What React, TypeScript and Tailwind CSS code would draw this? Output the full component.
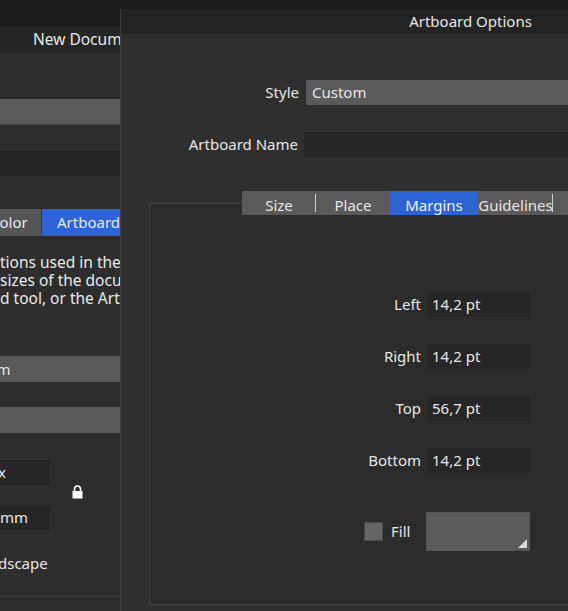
import React from "react";

const font = { fontFamily: '"Noto Sans", "Open Sans", sans-serif' };

function LockIcon() {
  return (
    <svg width="11" height="14" viewBox="0 0 11 14" className="block">
      <path d="M2.5 6V4a3 3 0 0 1 6 0v2" fill="none" stroke="#fff" strokeWidth="1.6" />
      <rect x="0.5" y="6" width="10" height="7.5" fill="#fff" />
    </svg>
  );
}

function BackWindow() {
  return (
    <div className="flex flex-col w-[120px] h-full overflow-hidden text-[15px] text-[#e8e8e8]">
      <div className="h-[27px] bg-[#1c1c1c] shrink-0" />
      <div className="h-[26px] bg-[#252525] flex items-center whitespace-nowrap shrink-0">
        <span className="ml-[33px] text-[15.5px]">New Document</span>
      </div>
      <div className="flex-1 bg-[#2d2d2d] flex flex-col">
        <div className="h-[46px] shrink-0 border-b-2 border-[#292929]" />
        <div className="h-[26px] shrink-0 bg-[#5a5a5a] border-b-2 border-[#4b4b4b]" />
        <div className="h-[26px] shrink-0" />
        <div className="h-[25px] shrink-0 bg-[#232323]" />
        <div className="h-[33px] shrink-0" />
        <div className="flex h-[27px] shrink-0 whitespace-nowrap">
          <div className="w-[42px] bg-[#555555] flex items-center overflow-hidden">
            <span className="-ml-[10px]">Color</span>
          </div>
          <div className="flex-1 bg-[#2c63d6] border-l border-[#3a3a3a] flex items-center pl-[15px]">
            Artboard
          </div>
        </div>
        <div className="pt-[17px] leading-[18px] text-[15.5px] whitespace-nowrap flex flex-col shrink-0">
          <span>tions used in the current</span>
          <span>sizes of the document</span>
          <span>d tool, or the Artboard</span>
        </div>
        <div className="h-[49px] shrink-0" />
        <div className="h-[26px] shrink-0 bg-[#595959] flex items-center whitespace-nowrap overflow-hidden">
          <span className="-ml-[44px]">Custom</span>
        </div>
        <div className="h-[25px] shrink-0" />
        <div className="h-[26px] shrink-0 bg-[#595959]" />
        <div className="h-[27px] shrink-0" />
        <div className="flex items-start h-[25px] shrink-0">
          <div className="w-[50px] h-[25px] bg-[#262626] flex items-center overflow-hidden whitespace-nowrap">
            <span className="-ml-[2px]">x</span>
          </div>
          <div className="ml-[22px] mt-[25px]">
            <LockIcon />
          </div>
        </div>
        <div className="h-[20px] shrink-0" />
        <div className="w-[50px] h-[25px] shrink-0 bg-[#262626] flex items-center whitespace-nowrap">
          <span>mm</span>
        </div>
        <div className="mt-[21px] h-[24px] shrink-0 flex items-center whitespace-nowrap">
          <span className="-ml-[2px]">dscape</span>
        </div>
        <div className="mt-[21px] border-t border-[#3a3a3a] flex-1 bg-[#2b2b2b]" />
      </div>
    </div>
  );
}

const tabs = [
  { label: "Size", w: "w-[74px]", active: false, sep: true },
  { label: "Place", w: "w-[74px]", active: false, sep: false },
  { label: "Margins", w: "w-[88px]", active: true, sep: false },
  { label: "Guidelines", w: "w-[75px]", active: false, sep: true },
];

const margins = [
  { label: "Left", value: "14,2 pt" },
  { label: "Right", value: "14,2 pt" },
  { label: "Top", value: "56,7 pt" },
  { label: "Bottom", value: "14,2 pt" },
];

function ArtboardOptions() {
  return (
    <div className="absolute left-[120px] top-[9px] w-[700px] h-[602px] flex flex-col border-l border-[#3a3a3a] bg-[#2f2f2f] text-[15px] text-[#e6e6e6]">
      <div className="h-[25px] bg-[#232323] flex items-center justify-center shrink-0">
        Artboard Options
      </div>
      <div className="flex flex-col pt-[46px]">
        <div className="flex items-center h-[25px]">
          <div className="w-[178px] text-right">Style</div>
          <div className="ml-[7px] flex-1 h-[25px] bg-[#5a5a5a] flex items-center pl-[6px]">
            Custom
          </div>
        </div>
        <div className="flex items-center h-[25px] mt-[27px]">
          <div className="w-[177px] text-right whitespace-nowrap">Artboard Name</div>
          <div className="ml-[6px] flex-1 h-[25px] bg-[#262626]" />
        </div>
        <div className="flex h-[24px] mt-[34px] ml-[121px] bg-[#5a5a5a] relative z-10">
          {tabs.map((t) => (
            <div
              key={t.label}
              className={`${t.w} h-full flex items-center justify-center relative ${
                t.active ? "bg-[#2c62d2] text-[#eef2ff]" : ""
              }`}
            >
              <span className="translate-y-[2px]">{t.label}</span>
              {t.sep && (
                <span className="absolute right-0 top-[3px] bottom-[3px] w-px bg-[#d0d0d0]" />
              )}
            </div>
          ))}
        </div>
        <div className="ml-[28px] -mt-[12px] h-[402px] border border-[#424242] bg-[#2b2b2b] flex flex-col">
          <div className="grid grid-cols-[271px_103px] gap-x-[6px] gap-y-[27px] pt-[88px]">
            {margins.map((m) => (
              <React.Fragment key={m.label}>
                <div className="h-[25px] flex items-center justify-end">{m.label}</div>
                <div className="h-[25px] bg-[#262626] flex items-center pl-[5px]">{m.value}</div>
              </React.Fragment>
            ))}
          </div>
          <div className="flex items-center mt-[39px] ml-[214px]">
            <div className="w-[19px] h-[19px] bg-[#656565] border border-[#4a4a4a]" />
            <span className="ml-[8px]">Fill</span>
            <div className="ml-[16px] w-[104px] h-[39px] bg-[#5a5a5a] border border-[#555555] relative">
              <svg width="9" height="9" viewBox="0 0 9 9" className="absolute right-[2px] bottom-[2px]">
                <path d="M9 0V9H0Z" fill="#d8d8d8" />
              </svg>
            </div>
          </div>
        </div>
      </div>
    </div>
  );
}

export default function App() {
  return (
    <div className="relative w-[568px] h-[611px] overflow-hidden bg-[#1c1c1c]" style={font}>
      <BackWindow />
      <ArtboardOptions />
    </div>
  );
}
